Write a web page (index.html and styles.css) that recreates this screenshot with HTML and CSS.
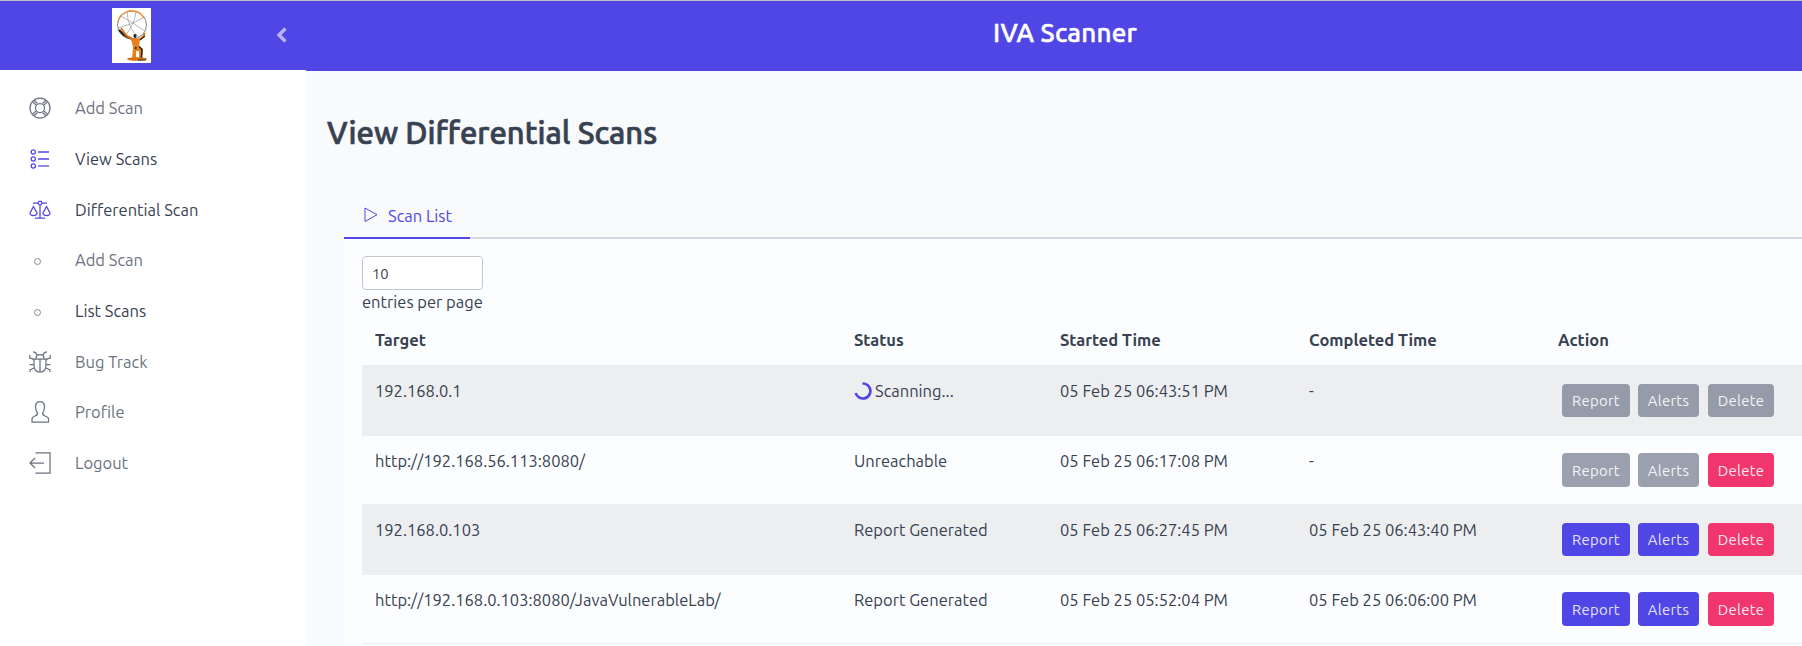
FILE: index.html
```html
<!DOCTYPE html>
<html lang="en">
<head>
<meta charset="utf-8">
<title>IVA Scanner</title>
<link rel="stylesheet" href="styles.css">
</head>
<body>
<div class="app">
  <aside class="sidebar">
    <div class="brand">
      <svg class="logo" viewBox="0 0 39 55" width="39" height="55">
        <rect width="39" height="55" fill="#fff"/>
        <g fill="none" stroke="#999" stroke-width=".7">
          <ellipse cx="20" cy="17" rx="14.500" ry="14" stroke="#777" stroke-width=".9"/>
          <path d="M6 20Q19 17 33 9M9 8Q20 14 33 23M15 4Q16 22 27 29M24 3Q23 16 13 28"/>
        </g>
        <path d="M6 14Q7 6 17 3Q28 2 32 10" fill="none" stroke="#ef8a22" stroke-width="1.300"/>
        <path d="M7 22L12 27L20 31" fill="none" stroke="#222" stroke-width="2.200"/>
        <path d="M9 20L14 27L20 31.500H27L31 29L33 25" fill="none" stroke="#e07510" stroke-width="1.800"/>
        <path d="M28 32L33 28" fill="none" stroke="#222" stroke-width="1.200"/>
        <ellipse cx="23" cy="28" rx="1.600" ry="2" fill="#222"/>
        <path d="M19 31L28 31L27 38L31 41L30 51L27 51L27 43L24 43L24 51L20 51L21 39Z" fill="#e8801a"/>
        <path d="M27 38.500L30 41.500L29.500 50M24 39L23.500 41" fill="none" stroke="#222" stroke-width="1.500"/>
        <ellipse cx="25" cy="51" rx="10" ry="1.700" fill="#d97010"/>
        <path d="M26 52H34" stroke="#333"/>
      </svg>
      <svg class="collapse" viewBox="0 0 12 16" width="12" height="16"><path d="M9.500 1.500L3 8L9.500 14.500" fill="none" stroke="#b9b5f5" stroke-width="3.400"/></svg>
    </div>
    <nav class="menu">
      <a class="item"><svg class="icon" viewBox="0 0 22 22"><circle cx="11" cy="11" r="10"/><circle cx="11" cy="11" r="4.500"/><path d="M3.500 4.500L7 8M5 3L8.500 6.500M17 3L13.500 6.500M18.500 4.500L15 8M3.500 17.500L7 14M5 19L8.500 15.500M17 19L13.500 15.500M18.500 17.500L15 14"/></svg><span>Add Scan</span></a>
      <a class="item current"><svg class="icon" viewBox="0 0 22 22"><circle cx="4.300" cy="4" r="2.100"/><circle cx="4.300" cy="11" r="2.100"/><circle cx="4.300" cy="18" r="2.100"/><path d="M9 4H20M9 11H20" stroke-width="1.700"/><path d="M9 18H20"/></svg><span>View Scans</span></a>
      <a class="item current"><svg class="icon" viewBox="0 0 22 22"><circle cx="11" cy="4" r="1.800"/><path d="M4 4H9M13 4H18M11 6V19M6 19H16M4.500 7.500L1 14Q1 16.500 4.500 16.500Q8 16.500 8 14ZM17.500 7.500L14 14Q14 16.500 17.500 16.500Q21 16.500 21 14Z"/></svg><span>Differential Scan</span></a>
      <a class="item"><i class="dot"></i><span>Add Scan</span></a>
      <a class="item current"><i class="dot"></i><span>List Scans</span></a>
      <a class="item"><svg class="icon" viewBox="0 0 22 22"><path d="M7 7.500Q7 3.500 11 3.500Q15 3.500 15 7.500M5 8H17V14Q17 21 11 21Q5 21 5 14ZM11 8V21M4 .8Q7 .8 8 4M18 .8Q15 .8 14 4M.8 4V7Q3 7 5 9M21.200 4V7Q19 7 17 9M.5 13.500H5M17 13.500H21.500M1 21V19L5 17M21 21V19L17 17"/></svg><span>Bug Track</span></a>
      <a class="item"><svg class="icon" viewBox="0 0 22 22"><path d="M11 .7Q6.500 .7 6.500 6Q6.500 9.500 8.500 12Q8.800 14 6 15Q3 16 3 18V21H19.500V18Q19.500 16 16 15Q13.500 14 13.700 12Q15.500 9.500 15.500 6Q15.500 .7 11 .7Z"/></svg><span>Profile</span></a>
      <a class="item"><svg class="icon" viewBox="0 0 22 22"><path d="M6.500 .8H21V21H6.500M15 11H1M6 6L1 11L6 16"/></svg><span>Logout</span></a>
    </nav>
  </aside>
  <main class="main">
    <header class="topbar"><span>IVA Scanner</span></header>
    <section class="content">
      <h1 class="heading">View Differential Scans</h1>
      <div class="tabs"><a class="tab"><svg class="play" viewBox="0 0 14 16" width="14" height="16"><path d="M1 1V14.500L13 7.700Z" fill="none" stroke="#4f46e5"/></svg><span>Scan List</span></a></div>
      <div class="panel">
        <div class="select">10</div><div class="entries">entries per page</div>
        <div class="table">
          <div class="row head"><div>Target</div><div>Status</div><div>Started Time</div><div>Completed Time</div><div>Action</div></div>
          <div class="row odd"><div>192.168.0.1</div><div class="status"><svg class="spinner" viewBox="0 0 18 18" width="18" height="18"><path d="M8.500 1.500A7.500 7.500 0 1 1 1.700 11" fill="none" stroke="#4f46e5" stroke-width="2.700"/></svg><span>Scanning...</span></div><div>05 Feb 25 06:43:51 PM</div><div>-</div><div class="actions"><b class="btn report off">Report</b><b class="btn alerts off">Alerts</b><b class="btn delete off">Delete</b></div></div>
          <div class="row even"><div>http://192.168.56.113:8080/</div><div>Unreachable</div><div>05 Feb 25 06:17:08 PM</div><div>-</div><div class="actions"><b class="btn report off">Report</b><b class="btn alerts off">Alerts</b><b class="btn delete">Delete</b></div></div>
          <div class="row odd"><div>192.168.0.103</div><div>Report Generated</div><div>05 Feb 25 06:27:45 PM</div><div>05 Feb 25 06:43:40 PM</div><div class="actions"><b class="btn report">Report</b><b class="btn alerts">Alerts</b><b class="btn delete">Delete</b></div></div>
          <div class="row even"><div>http://192.168.0.103:8080/JavaVulnerableLab/</div><div>Report Generated</div><div>05 Feb 25 05:52:04 PM</div><div>05 Feb 25 06:06:00 PM</div><div class="actions"><b class="btn report">Report</b><b class="btn alerts">Alerts</b><b class="btn delete">Delete</b></div></div>
          <div class="tail"></div>
        </div>
      </div>
    </section>
  </main>
</div>
</body>
</html>
```
FILE: styles.css
```css
* { box-sizing: border-box; }
body { margin: 0; height: 646px; overflow: hidden; background: #f8fafc; color: #374151; font: 16.5px/24px Ubuntu, "Noto Sans", sans-serif; white-space: nowrap; }
.app { display: flex; height: 646px; border-top: 1px solid #bcbfc8; }
.sidebar { width: 306px; flex: none; background: #fff; }
.brand { display: flex; align-items: flex-start; height: 69px; padding: 7px 0 0 112px; background: #4f46e5; }
.logo { display: block; }
.collapse { margin: 19px 0 0 125px; }
.menu { padding-top: 13px; }
.item { display: flex; align-items: center; height: 50.7px; padding-left: 29px; color: #6b7280; }
.icon { width: 22px; height: 22px; margin-right: 24px; fill: none; stroke: #6b7280; stroke-width: 1.25; }
.current { color: #374151; }
.current .icon { stroke: #4f46e5; }
.dot { width: 7px; height: 7px; margin: 2px 34px 0 5px; border: 1px solid #858b98; border-radius: 50%; }
.main { flex: 1; min-width: 0; }
.topbar { height: 70px; padding: 14px 0 0 687px; background: #4f46e5; color: #fff; font-size: 26px; font-weight: 500; line-height: 36px; letter-spacing: .25px; -webkit-text-stroke: .5px #fff; }
.content { padding: 39px 0 0 21px; }
.heading { margin: 0; color: #374151; font-size: 31px; font-weight: 500; line-height: 46px; -webkit-text-stroke: .7px #374151; }
.tabs { height: 44px; margin: 39px 0 0 17px; border-bottom: 2px solid #d6d8e1; }
.tab { display: flex; align-items: center; width: 126px; height: 44px; padding: 0 0 0 20px; border-bottom: 2px solid #4f46e5; color: #4f46e5; }
.play { margin: -2px 10px 0 0; }
.panel { height: 407px; margin-left: 17px; padding: 17px 0 0 18px; background: #fcfdfe; }
.select { width: 121px; height: 34px; padding-left: 9px; border: 1px solid #c2c6cf; border-radius: 4px; background: #fff; font-size: 14.8px; line-height: 33px; }
.entries { height: 25px; line-height: 24px; }
.row { display: grid; grid-template-columns: 479px 206px 249px 249px 1fr; padding-left: 13px; }
.head { height: 50px; padding-top: 13px; font-weight: 700; }
.odd { height: 71px; padding-top: 14px; background: #edeef0; }
.even { height: 68px; padding-top: 13px; }
.status { display: flex; height: 24px; align-items: center; }
.spinner { margin-right: 3px; }
.actions { display: flex; padding: 5px 0 0 4px; }
.even .actions { padding-top: 4px; }
.btn { height: 33px; border-radius: 4px; background: #4f46e5; color: #e4e3fb; font-size: 14.85px; font-weight: 400; line-height: 33px; text-align: center; letter-spacing: .3px; }
.even .btn { height: 34px; line-height: 35px; }
.report { width: 68px; margin-right: 8px; }
.alerts { width: 61px; margin-right: 9px; }
.delete { width: 66px; background: #f1366d; color: #fdeaf0; }
.off, .delete.off { background: #9aa0ae; color: #f3f4f6; }
.odd .off { background: #959ba9; }
.tail { height: 1px; background: #e9ebee; }
```
